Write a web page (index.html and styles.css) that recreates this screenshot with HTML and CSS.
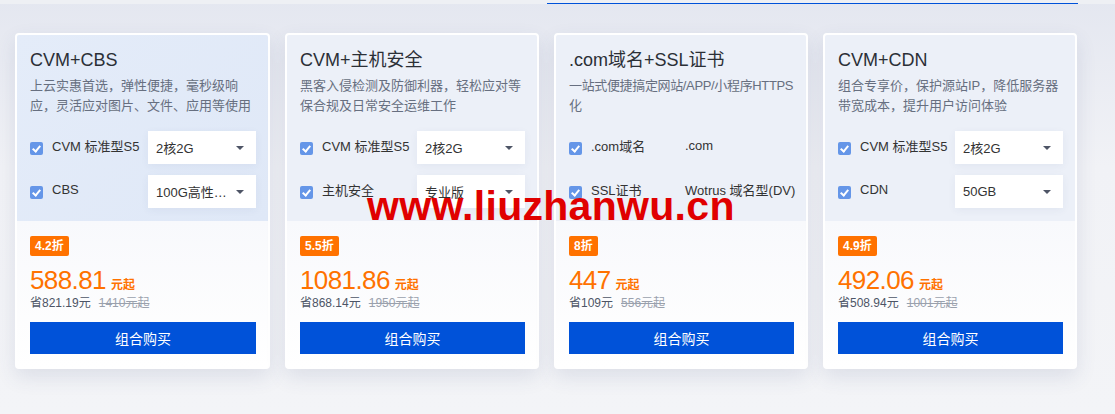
FILE: index.html
```html
<!DOCTYPE html>
<html lang="zh-CN">
<head>
  <meta charset="UTF-8">
  <title>组合购买</title>
  <link rel="stylesheet" href="styles.css">
</head>
<body>

<div class="topbar">
  <div class="tab-line"></div>
</div>

<div class="cards">

  <div class="card active">
    <div class="card-top">
      <div class="title">CVM+CBS</div>
      <div class="desc">上云实惠首选，弹性便捷，毫秒级响应，灵活应对图片、文件、应用等使用</div>
      <div class="rows">
        <div class="row">
          <span class="check"></span>
          <span class="label">CVM 标准型S5</span>
          <div class="select">2核2G<i class="caret"></i></div>
        </div>
        <div class="row">
          <span class="check"></span>
          <span class="label">CBS</span>
          <div class="select">100G高性…<i class="caret"></i></div>
        </div>
      </div>
    </div>
    <div class="card-bottom">
      <span class="badge">4.2折</span>
      <div class="price">588.81<span class="unit">元起</span></div>
      <div class="save">省821.19元<span class="old">1410元起</span></div>
      <button class="buy">组合购买</button>
    </div>
  </div>

  <div class="card">
    <div class="card-top">
      <div class="title">CVM+主机安全</div>
      <div class="desc">黑客入侵检测及防御利器，轻松应对等保合规及日常安全运维工作</div>
      <div class="rows">
        <div class="row">
          <span class="check"></span>
          <span class="label">CVM 标准型S5</span>
          <div class="select">2核2G<i class="caret"></i></div>
        </div>
        <div class="row">
          <span class="check"></span>
          <span class="label">主机安全</span>
          <div class="select">专业版<i class="caret"></i></div>
        </div>
      </div>
    </div>
    <div class="card-bottom">
      <span class="badge">5.5折</span>
      <div class="price">1081.86<span class="unit">元起</span></div>
      <div class="save">省868.14元<span class="old">1950元起</span></div>
      <button class="buy">组合购买</button>
    </div>
  </div>

  <div class="card">
    <div class="card-top">
      <div class="title">.com域名+SSL证书</div>
      <div class="desc tight">一站式便捷搞定网站/APP/小程序HTTPS化</div>
      <div class="rows">
        <div class="row">
          <span class="check"></span>
          <span class="label">.com域名</span>
          <div class="value">.com</div>
        </div>
        <div class="row">
          <span class="check"></span>
          <span class="label">SSL证书</span>
          <div class="value">Wotrus 域名型(DV)</div>
        </div>
      </div>
    </div>
    <div class="card-bottom">
      <span class="badge">8折</span>
      <div class="price">447<span class="unit">元起</span></div>
      <div class="save">省109元<span class="old">556元起</span></div>
      <button class="buy">组合购买</button>
    </div>
  </div>

  <div class="card">
    <div class="card-top">
      <div class="title">CVM+CDN</div>
      <div class="desc">组合专享价，保护源站IP，降低服务器带宽成本，提升用户访问体验</div>
      <div class="rows">
        <div class="row">
          <span class="check"></span>
          <span class="label">CVM 标准型S5</span>
          <div class="select">2核2G<i class="caret"></i></div>
        </div>
        <div class="row">
          <span class="check"></span>
          <span class="label">CDN</span>
          <div class="select">50GB<i class="caret"></i></div>
        </div>
      </div>
    </div>
    <div class="card-bottom">
      <span class="badge">4.9折</span>
      <div class="price">492.06<span class="unit">元起</span></div>
      <div class="save">省508.94元<span class="old">1001元起</span></div>
      <button class="buy">组合购买</button>
    </div>
  </div>

</div>

<div class="watermark">www.liuzhanwu.cn</div>

</body>
</html>
```

FILE: styles.css
```css
body {
  margin: 0;
  height: 414px;
  font-family: "Liberation Sans", "Noto Sans CJK SC", sans-serif;
  background: linear-gradient(#e4e7f0, #f1f2f6 40%, #f3f4f7);
  color: #333;
  position: relative;
  overflow: hidden;
}

.topbar {
  height: 4px;
  background: #eef0f4;
  position: relative;
}

.tab-line {
  position: absolute;
  left: 547px;
  top: 3px;
  width: 531px;
  height: 1px;
  background: #0052d9;
}

.cards {
  display: flex;
  gap: 15px;
  padding: 29px 0 0 15px;
}

.card {
  width: 254px;
  box-sizing: border-box;
  border: 2px solid #fff;
  border-radius: 4px;
  background: #fff;
  overflow: hidden;
  box-shadow: 0 8px 20px rgba(54, 73, 120, 0.12);
}

.card.active {
  border-color: transparent;
  width: 255px;
}

.card-top {
  height: 186px;
  box-sizing: border-box;
  padding: 12px 12px 0 13px;
  background: #ecf0f8;
}

.card.active .card-top {
  background: linear-gradient(135deg, #e4ecf9, #dfe8f7);
}

.title {
  font-size: 18px;
  line-height: 26px;
  color: #2b2f36;
}

.desc {
  margin: 3px -6px 0 0;
  font-size: 13px;
  line-height: 20px;
  color: #676f80;
  height: 40px;
  word-break: break-all;
}

.desc.tight {
  letter-spacing: -0.35px;
}

.rows {
  margin-top: 15px;
  display: flex;
  flex-direction: column;
  gap: 11px;
}

.row {
  display: flex;
  align-items: center;
  height: 33px;
}

.check {
  width: 13px;
  height: 13px;
  border-radius: 2px;
  background: #6596e8;
  margin-right: 9px;
  margin-top: 2px;
  position: relative;
  flex: none;
}

.check::after {
  content: "";
  position: absolute;
  left: 4px;
  top: 2px;
  width: 3px;
  height: 6px;
  border: solid #fff;
  border-width: 0 2px 2px 0;
  transform: rotate(40deg);
}

.label {
  flex: 1;
  font-size: 13px;
  color: #333;
  white-space: nowrap;
  margin-top: -4px;
}

.select {
  width: 108px;
  height: 33px;
  box-sizing: border-box;
  padding: 0 8px;
  background: #fff;
  font-size: 13px;
  color: #333;
  display: flex;
  align-items: center;
  justify-content: space-between;
  box-shadow: 0 2px 8px rgba(54, 73, 120, 0.06);
}

.caret {
  width: 0;
  height: 0;
  border-left: 4px solid transparent;
  border-right: 4px solid transparent;
  border-top: 4px solid #4e5566;
  margin-right: 4px;
}

.value {
  width: 109px;
  font-size: 13px;
  color: #333;
  white-space: nowrap;
  margin-top: -4px;
}

.card-bottom {
  padding: 15px 12px 13px 13px;
  background: linear-gradient(#f8f9fc, #fff);
}

.badge {
  display: block;
  width: fit-content;
  height: 20px;
  line-height: 20px;
  padding: 0 5px;
  border-radius: 2px;
  background: #ff7200;
  color: #fff;
  font-size: 12px;
  font-weight: bold;
}

.price {
  margin-top: 9px;
  font-size: 26px;
  line-height: 30px;
  letter-spacing: -0.6px;
  color: #ff7200;
}

.unit {
  font-size: 12px;
  line-height: 1;
  font-weight: bold;
  letter-spacing: 0;
  margin-left: 5px;
}

.save {
  font-size: 12px;
  line-height: 16px;
  color: #4d5566;
}

.old {
  margin-left: 8px;
  color: #9aa1ad;
  text-decoration: line-through;
}

.buy {
  display: block;
  width: 100%;
  height: 32px;
  margin-top: 11px;
  border: none;
  background: #0052d9;
  color: #fff;
  font-family: inherit;
  font-size: 14px;
  cursor: pointer;
}

.watermark {
  position: absolute;
  left: 367px;
  top: 183px;
  font-size: 41px;
  font-weight: bold;
  color: #e00000;
  letter-spacing: 0.3px;
}
```
